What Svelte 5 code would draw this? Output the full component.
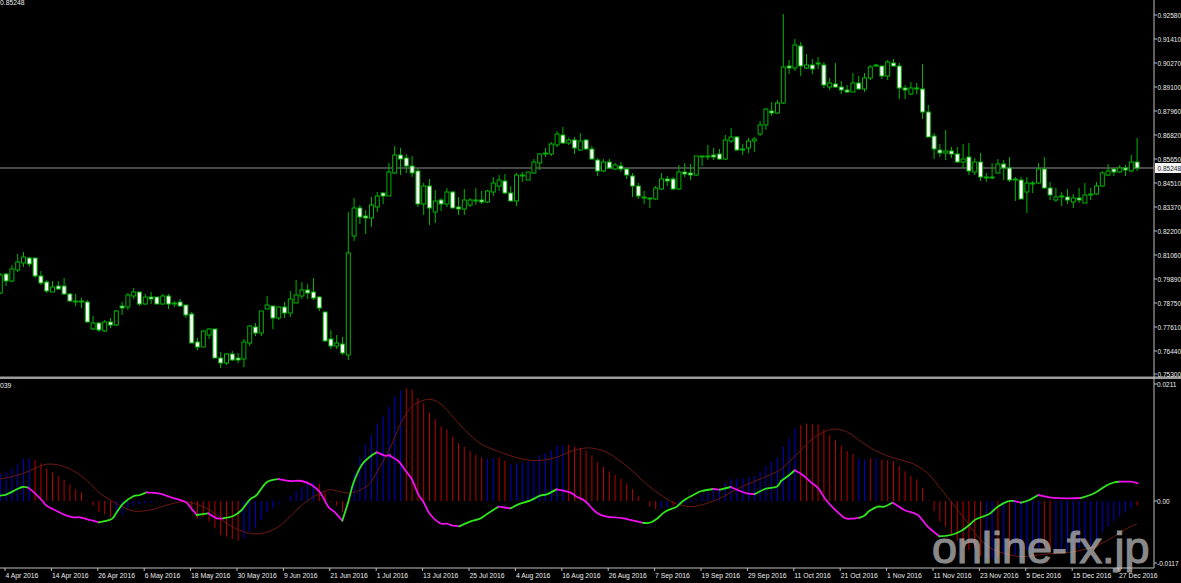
<script>
	// [body top, body bottom, wick top, wick bottom, filled]
	const candles = [
		[275,293,273,294,0],[274,281,273,286,1],[269,281,265,282,0],[262,270,254,272,0],[257,263,252,267,0],[258,264,257,267,1],[258,276,258,278,1],[276,283,271,285,1],[282,291,280,293,1],[287,292,281,292,0],
		[286,289,281,290,1],[286,294,278,295,1],[294,301,293,302,1],[301,302,294,306,1],[301,302,298,308,1],[302,322,300,322,1],[323,329,316,330,0],[323,330,322,332,1],[322,331,320,332,0],[322,325,318,328,1],
		[311,325,310,326,0],[306,308,302,315,1],[295,307,293,310,0],[292,296,288,299,0],[292,304,292,306,1],[297,304,294,305,0],[297,299,292,304,1],[297,304,297,304,1],[296,304,294,305,0],[296,304,294,309,1],
		[303,304,301,307,1],[302,306,299,307,1],[305,315,305,318,1],[314,343,312,343,1],[342,347,338,350,1],[331,347,330,347,0],[329,335,328,339,0],[329,358,329,358,1],[358,363,352,368,1],[354,363,353,365,0],
		[354,360,351,361,1],[358,360,353,363,1],[342,359,339,367,0],[326,343,325,346,0],[327,333,323,336,1],[311,333,311,336,0],[305,309,296,309,0],[306,318,306,329,1],[307,318,306,320,0],[307,313,302,318,1],
		[299,313,291,317,0],[295,303,280,303,0],[290,296,282,299,0],[290,293,284,299,1],[292,298,278,300,1],[297,308,296,311,1],[312,341,312,341,1],[339,346,330,349,1],[343,346,335,349,0],[344,353,337,355,1],
		[253,355,212,360,0],[208,236,198,241,0],[208,217,205,224,1],[216,218,210,234,1],[205,218,197,227,0],[196,207,192,212,0],[193,196,192,204,1],[172,196,163,196,0],[155,173,146,174,0],[155,159,148,175,1],
		[158,166,154,173,1],[166,173,156,177,1],[171,204,168,207,1],[186,204,183,215,0],[186,208,179,225,1],[201,212,190,223,0],[200,204,198,211,1],[192,204,188,207,0],[192,208,191,208,1],[207,209,197,215,1],
		[200,209,189,215,0],[200,205,198,207,0],[200,201,188,205,1],[200,202,191,204,1],[191,202,190,203,0],[183,192,177,196,0],[180,186,175,191,0],[181,193,174,194,1],[193,201,186,201,1],[175,201,173,206,0],
		[175,176,172,182,1],[172,180,172,180,0],[162,173,159,174,0],[154,163,153,170,0],[153,154,148,157,1],[144,154,142,156,0],[134,145,131,147,0],[135,143,127,144,1],[140,143,138,145,0],[140,148,137,154,1],
		[141,150,133,151,0],[140,149,139,150,1],[149,159,146,160,1],[160,171,158,176,1],[162,171,159,172,0],[162,168,159,169,1],[165,169,163,170,0],[166,169,162,172,1],[169,175,168,179,1],[176,186,173,197,1],
		[186,196,183,199,1],[197,198,191,204,1],[198,199,198,208,1],[188,199,186,200,0],[179,189,173,190,0],[179,181,176,186,1],[179,189,177,190,1],[172,189,165,190,0],[172,174,163,177,1],[173,175,164,180,1],
		[156,175,156,176,0],[156,157,156,166,1],[156,157,145,160,1],[155,157,148,160,1],[154,159,149,160,1],[140,159,135,160,0],[137,141,128,143,0],[137,150,136,151,1],[149,150,144,155,1],[141,148,138,153,0],
		[139,141,137,152,0],[125,134,121,136,0],[109,125,108,130,0],[111,113,102,116,1],[103,113,100,114,0],[67,103,14,104,0],[66,68,60,74,1],[45,68,39,71,0],[46,66,42,76,1],[65,68,54,69,0],
		[65,69,59,74,1],[63,64,57,69,1],[65,85,62,88,1],[83,87,78,90,0],[84,87,63,88,1],[87,90,81,94,1],[90,92,85,93,1],[83,92,73,92,0],[83,89,76,90,1],[78,89,73,92,0],
		[67,78,65,80,0],[65,66,64,67,1],[66,76,66,79,1],[62,76,60,80,0],[63,66,59,67,1],[66,88,63,99,1],[88,90,85,99,1],[88,94,82,95,0],[88,89,83,94,1],[89,112,64,119,1],
		[112,137,105,137,1],[136,149,133,159,1],[150,153,144,157,1],[151,153,130,160,0],[151,154,147,158,1],[154,162,147,163,1],[159,162,144,168,0],[157,171,143,175,1],[162,172,158,175,0],[162,177,153,181,1],
		[177,178,173,182,1],[177,178,163,179,0],[164,173,159,174,0],[164,168,160,180,1],[168,180,157,182,1],[179,180,177,201,1],[180,199,177,199,1],[183,192,177,213,0],[183,184,181,193,1],[169,183,163,184,0],
		[169,188,157,189,1],[188,195,182,200,1],[197,200,188,202,0],[196,197,192,206,1],[197,200,189,204,1],[198,202,194,208,0],[198,200,188,203,1],[195,203,183,203,0],[194,195,188,200,0],[186,194,182,195,0],
		[173,186,171,187,0],[171,175,164,176,0],[169,172,168,176,1],[168,172,165,173,0],[168,170,165,176,1],[162,171,155,172,0],[162,168,138,171,1]
	];

	// histogram end points traced at 3x, one per candle
	const histColors =
		'bbbbbbrrrrrrrrrrrrrrbbbbbbbrbbbrrrrrrrrrrrbbbbbbbbbbbbbrrrrrbbbbbbbbbbrrrrrrrrrrrrrrbbrrbbbbbbbbbbrrrrrrrrrrrrrrrrbbrbbbbbbbbbbbbbbbbbbbbbrrrrrrrrrrbbrbrrrrrrrrrrrrrrrrrrbbrbrbbbbbrrbbbbbbbbbbbbbb';
	const histEnds = [
		298,290,280,268,252,250,255,265,281,292,303,315,328,343,352,376,392,410,418,427,415,418,400,392,388,385,382,380,379,378,378,380,385,408,430,425,440,460,480,485,492,497,490,470,458,435,412,400,385,378,
		363,348,335,325,322,327,352,382,392,412,360,295,245,208,178,146,124,95,65,47,40,44,70,85,112,132,153,163,185,204,215,228,239,248,252,250,248,257,268,265,263,258,258,240,235,225,213,211,209,215,
		218,226,241,261,275,289,300,311,326,343,364,376,395,402,400,398,392,385,385,375,372,358,350,342,340,325,311,311,310,307,303,290,273,260,248,214,190,160,150,146,148,148,163,180,195,212,228,237,250,254,
		250,250,254,255,258,273,289,303,313,339,376,408,440,455,478,498,515,525,520,543,550,553,545,540,552,540,540,525,528,520,520,530,525,535,530,525,520,515,510,493,470,455,438,425,412,400,392
	];

	// signal line, traced per crop: x offset of the crop, then zoomed x,y pairs
	const signalRuns = [
		[0, [0,312,35,305,70,295,105,280,130,270,150,267,175,270,205,280,240,300,270,325,300,355,340,380,370,397,400,408,430,408,460,403,490,393,520,385,550,380,580,385,620,400,650,420,680,445,710,462,745,474,780,476,810,468,840,452,870,425,900,395,930,372,960,355,990,344,1020,350,1050,354,1080,345,1110,325,1140,275]],
		[390, [0,220,30,150,60,100,90,80,120,73,150,85,180,115,210,150,240,180,270,205,300,220,340,235,380,248,420,256,460,255,500,247,540,230,580,220,610,220,650,232,690,258,730,290,770,328,810,358,850,383,890,394,920,393,960,382,1000,365,1040,342,1080,325,1120,308,1160,290]],
		[781, [0,283,30,255,60,225,90,195,130,170,165,162,200,172,240,200,280,225,320,243,360,255,400,268,440,295,470,330,510,380,550,430,590,485,630,520,670,535,720,545,770,540,830,534,880,530,940,515,990,490,1030,465,1068,446]]
	];

	// MACD line, green while rising and magenta while falling
	const macdRuns = [
		[0, 'g', [0,362,20,358,50,343,68,336,85,338]],
		[0, 'm', [85,338,105,355,125,375,140,392,170,408,200,422,220,427,240,427,270,435,297,442]],
		[0, 'g', [297,442,335,432,350,412,370,385,400,364,420,360,440,352]],
		[0, 'm', [440,352,480,356,510,366,555,380,570,395,590,420]],
		[0, 'g', [590,420,625,415]],
		[0, 'm', [625,415,650,430,670,430]],
		[0, 'g', [670,430,700,423,725,405,750,373,770,360,800,322,835,312]],
		[0, 'm', [835,312,870,318,905,318,935,330,960,352,985,395,1005,412,1027,437]],
		[0, 'g', [1027,437,1045,380,1060,325,1085,270,1110,245,1130,232]],
		[0, 'm', [1130,232,1155,242,1170,240]],
		[390, 'm', [0,243,25,258,45,285,65,312,85,358,100,380,120,418,150,445,170,446,190,452,208,454]],
		[390, 'g', [208,454,240,440,270,431,290,418,325,395]],
		[390, 'm', [325,395,362,400]],
		[390, 'g', [362,400,385,388,420,377,450,362,470,358,500,343]],
		[390, 'm', [500,343,540,352,560,365,585,378,620,413,650,425,700,430,760,444]],
		[390, 'g', [760,444,780,443,800,432,825,410,860,395,880,377,915,357,935,348,970,342]],
		[390, 'm', [970,342,990,344]],
		[390, 'g', [990,344,1022,336]],
		[390, 'm', [1022,336,1050,348,1075,356,1095,357]],
		[390, 'g', [1095,357,1125,342,1160,335,1173,318]],
		[781, 'g', [0,318,25,300,41,286]],
		[781, 'm', [41,286,65,300,90,322,112,340,135,375,160,402,190,428,210,431,235,428]],
		[781, 'g', [235,428,250,422,265,408,290,395,310,395,335,383]],
		[781, 'm', [335,383,370,405,410,420,440,455,475,484]],
		[781, 'g', [475,484,510,480,540,468,565,450,585,433,625,417,650,395,680,379,700,378]],
		[781, 'm', [700,378,720,383]],
		[781, 'g', [720,383,745,375,772,360]],
		[781, 'm', [772,360,810,368,860,370,900,369]],
		[781, 'g', [900,369,940,355,975,332,1000,322,1015,320]],
		[781, 'm', [1015,320,1050,320,1070,325]]
	];

	const prices = [
		['0.92580',15],['0.91410',39],['0.90270',63],['0.89100',87],['0.87960',111],['0.86820',135],['0.85650',159],['0.84510',183],
		['0.83370',207],['0.82200',231],['0.81060',255],['0.79890',279],['0.78750',303],['0.77610',327],['0.76440',351],['0.75300',374]
	];
	const macdScale = [['0.0211',384],['0.00',501],['-0.0117',563]];
	const dates = [
		'4 Apr 2016','14 Apr 2016','26 Apr 2016','6 May 2016','18 May 2016','30 May 2016','9 Jun 2016','21 Jun 2016','1 Jul 2016',
		'13 Jul 2016','25 Jul 2016','4 Aug 2016','16 Aug 2016','26 Aug 2016','7 Sep 2016','19 Sep 2016','29 Sep 2016','11 Oct 2016',
		'21 Oct 2016','1 Nov 2016','11 Nov 2016','23 Nov 2016','5 Dec 2016','15 Dec 2016','27 Dec 2016'
	];

	const STEP = 5.8;
	const barX = (i) => STEP * i + 0.3;
	const toPts = (x0, flat) => {
		const pts = [];
		for (let i = 0; i < flat.length; i += 2) pts.push([x0 + flat[i] / 3, 375 + flat[i + 1] / 3]);
		return pts;
	};
	// catmull-rom through the traced points
	const smooth = (pts) => {
		let d = `M${pts[0][0].toFixed(1)} ${pts[0][1].toFixed(1)}`;
		for (let i = 0; i < pts.length - 1; i++) {
			const p0 = pts[i - 1] || pts[i];
			const p1 = pts[i];
			const p2 = pts[i + 1];
			const p3 = pts[i + 2] || p2;
			const c1x = p1[0] + (p2[0] - p0[0]) / 6;
			const c1y = p1[1] + (p2[1] - p0[1]) / 6;
			const c2x = p2[0] - (p3[0] - p1[0]) / 6;
			const c2y = p2[1] - (p3[1] - p1[1]) / 6;
			d += `C${c1x.toFixed(1)} ${c1y.toFixed(1)} ${c2x.toFixed(1)} ${c2y.toFixed(1)} ${p2[0].toFixed(1)} ${p2[1].toFixed(1)}`;
		}
		return d;
	};

	const signalPath = smooth(signalRuns.flatMap(([x0, flat]) => toPts(x0, flat)));
	const macdPaths = macdRuns.map(([x0, c, flat]) => ({ c, d: smooth(toPts(x0, flat)) }));
</script>

<svg class="chart" viewBox="0 0 1181 583" width="1181" height="583">
	<text class="label" x="0" y="4.5">0.85248</text>
	<text class="label" x="0" y="388">039</text>

	<!-- current price line sits behind the candles -->
	<line class="bid" x1="0" x2="1154" y1="168" y2="168" />

	{#each candles as [top, bottom, wickTop, wickBottom, filled], i}
		<line class="wick" x1={barX(i)} x2={barX(i)} y1={wickTop} y2={wickBottom} />
		<rect class="body" class:filled x={barX(i) - 2} y={top} width="4" height={bottom - top} />
	{/each}

	<rect class="separator" x="0" y="376.5" width="1181" height="2.5" />

	{#each histEnds as end, i}
		<line class={histColors[i] === 'b' ? 'hist up' : 'hist down'} x1={barX(i)} x2={barX(i)} y1="501" y2={375 + end / 3} />
	{/each}
	<path class="signal" d={signalPath} />
	{#each macdPaths as run}
		<path class={run.c === 'g' ? 'macd rising' : 'macd falling'} d={run.d} />
	{/each}

	<!-- axes -->
	<line class="axis" x1="1154" x2="1154" y1="0" y2="568" />
	<line class="axis" x1="0" x2="1154" y1="568" y2="568" />
	{#each prices as [value, y]}
		<line class="axis" x1="1154" x2="1157" y1={y} y2={y} />
		<text class="label scale" x="1157.5" y={y + 2.5}>{value}</text>
	{/each}
	<rect class="bid-box" x="1155" y="163" width="26" height="10" />
	<text class="label scale bid-text" x="1157.5" y="170.5">0.85248</text>
	{#each macdScale as [value, y]}
		<line class="axis" x1="1154" x2="1157" y1={y} y2={y} />
		<text class="label scale" x="1157" y={y + 2.5}>{value}</text>
	{/each}
	{#each dates as date, i}
		<line class="axis" x1={5 + 46.4 * i} x2={5 + 46.4 * i} y1="568" y2="571" />
		<text class="label" x={5.5 + 46.4 * i} y="578">{date}</text>
	{/each}

	<text class="watermark" x="932" y="563">online-fx.jp</text>
</svg>

<style>
	:global(body) {
		background: #000;
		overflow: hidden;
	}

	.chart {
		display: block;
		background: #000;
	}

	.label {
		font-family: 'Liberation Sans', sans-serif;
		font-size: 6.8px;
		fill: #ececec;
	}

	.label.scale {
		font-size: 6.5px;
	}

	.bid {
		stroke: #5f5f5f;
		stroke-width: 1.4;
	}

	.bid-box {
		fill: #f4f4f4;
	}

	.label.bid-text {
		fill: #222;
	}

	.wick {
		stroke: #00b400;
		stroke-width: 1;
	}

	.body {
		fill: #000;
		stroke: #00b400;
		stroke-width: 1;
	}

	.body.filled {
		fill: #fff;
	}

	.separator {
		fill: #9c9c9c;
	}

	.axis {
		stroke: #bdbdbd;
		stroke-width: 1;
	}

	.hist {
		stroke-width: 1;
	}

	.hist.up {
		stroke: #0000cc;
	}

	.hist.down {
		stroke: #b80000;
	}

	.signal {
		fill: none;
		stroke: #6e1a10;
		stroke-width: 1;
	}

	.macd {
		fill: none;
		stroke-width: 1.8;
		stroke-linecap: round;
		stroke-linejoin: round;
	}

	.macd.rising {
		stroke: #2fe81c;
	}

	.macd.falling {
		stroke: #f010f0;
	}

	.watermark {
		font-family: 'Liberation Sans', sans-serif;
		font-size: 45px;
		fill: #c4c4c4;
		stroke: #c4c4c4;
		stroke-width: 1.2;
		opacity: 0.7;
	}
</style>
